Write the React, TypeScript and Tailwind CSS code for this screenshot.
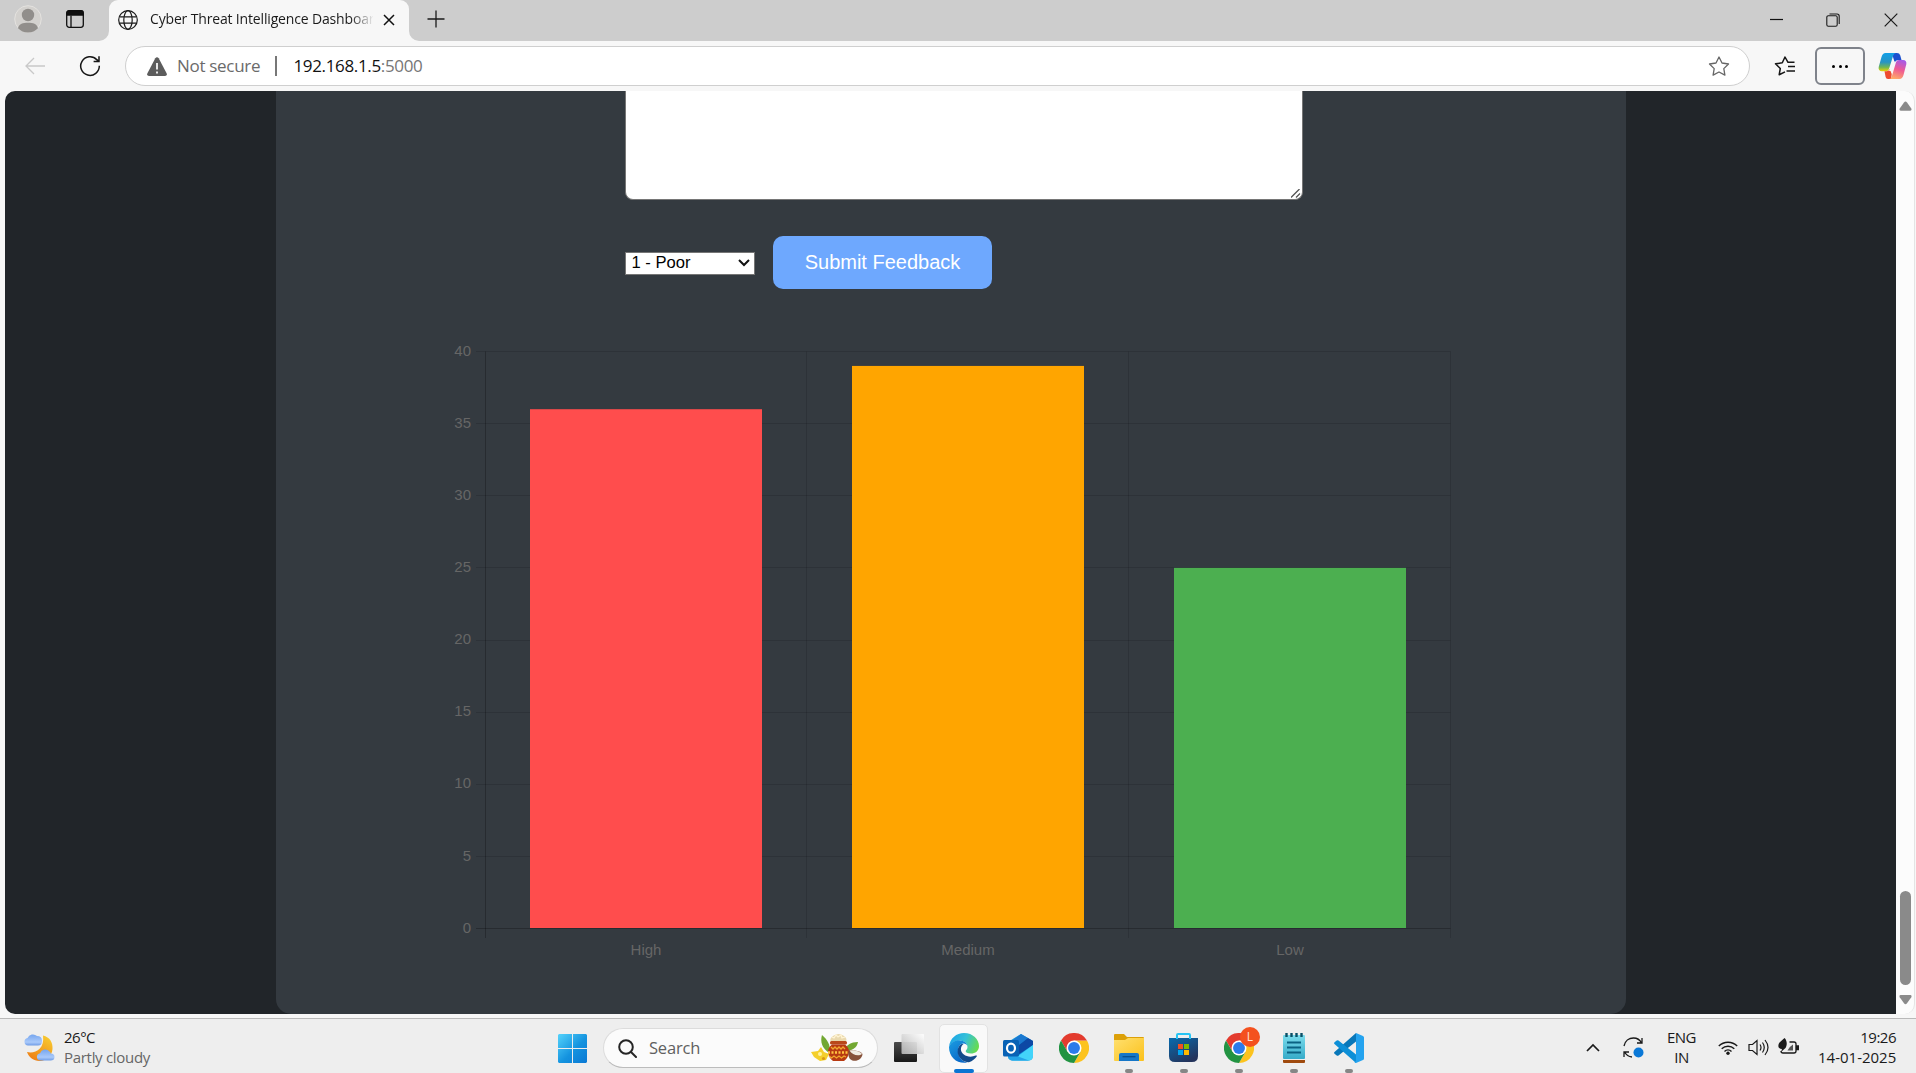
import React from "react";

const segoe = "font-['Open_Sans','Noto_Sans',sans-serif]";
const arial = "font-['Liberation_Sans',Arial,sans-serif]";

function GlobeIcon() {
  return (
    <svg width="20" height="20" viewBox="0 0 20 20" fill="none" stroke="#1a1a1a" strokeWidth="1.2" className="shrink-0">
      <circle cx="10" cy="10" r="9.3" />
      <ellipse cx="10" cy="10" rx="4.2" ry="9.3" />
      <path d="M1.5 6.8h17M1.5 13.2h17" />
    </svg>
  );
}

function TitleBar() {
  return (
    <div className="flex h-[41px] shrink-0 items-stretch bg-[#cdcdcd]">
      <div className="flex w-[109px] items-center rounded-br-[10px] pl-[14px]">
        <svg width="28" height="28" viewBox="0 0 28 28" className="-mt-[3px]">
          <circle cx="14" cy="14" r="13.3" fill="#d3d1ce" stroke="#e4e2df" />
          <circle cx="14" cy="10" r="6.2" fill="#918e8b" />
          <path d="M4 23.3c1-4.500 5-5.600 10-5.600s9 1.100 10 5.600A13.300 13.300 0 0 1 14 27.500 13.300 13.300 0 0 1 4 23.300z" fill="#918e8b" />
        </svg>
        <svg width="18" height="18" viewBox="0 0 18 18" fill="none" stroke="#0f0f0f" strokeWidth="1.300" className="-mt-[3px] ml-6">
          <rect x=".7" y=".7" width="16.600" height="16.600" rx="2.500" />
          <path d="M5 5.500v11.500" />
          <path d="M1 2.500Q1 1 2.500 1h13Q17 1 17 2.500V5H1z" fill="#0f0f0f" />
        </svg>
      </div>
      <div className="relative flex w-[300px] items-center rounded-t-[9px] bg-[#f7f7f7] pb-[2px] pl-[9px]">
        <svg className="absolute bottom-0 -left-[10px]" width="10" height="10"><path d="M10 0v10H0A10 10 0 0 0 10 0z" fill="#f7f7f7" /></svg>
        <svg className="absolute -right-[10px] bottom-0" width="10" height="10"><path d="M0 0v10h10A10 10 0 0 1 0 0z" fill="#f7f7f7" /></svg>
        <GlobeIcon />
        <span className={`${segoe} -mt-[2px] ml-[12px] w-[223px] overflow-hidden whitespace-nowrap bg-[linear-gradient(90deg,#1a1a1a_200px,transparent_224px)] bg-clip-text text-[14px] tracking-[-0.16px] text-transparent`}>
          Cyber Threat Intelligence Dashboard
        </span>
        <svg width="12" height="12" viewBox="0 0 12 12" stroke="#111" strokeWidth="1.500" className="mt-[1px] ml-[10px] shrink-0">
          <path d="M1 1l10 10M11 1L1 11" />
        </svg>
      </div>
      <svg width="18" height="18" viewBox="0 0 18 18" stroke="#1a1a1a" strokeWidth="1.300" className="ml-[18px] mt-[10px]">
        <path d="M9 .5v17M.5 9h17" />
      </svg>
      <div className="ml-auto flex items-center pr-[18px] pb-[2px]">
        <svg width="13" height="13" className="mr-[43px]"><path d="M0 6.500h13" stroke="#111" strokeWidth="1.200" /></svg>
        <svg width="14" height="14" viewBox="0 0 14 14" fill="none" stroke="#1a1a1a" strokeWidth="1.100" className="mr-[44px]">
          <rect x=".8" y="2.800" width="10.400" height="10.400" rx="1.500" />
          <path d="M3.500 1h7.500q2.200 0 2.200 2.200V11" />
        </svg>
        <svg width="14" height="14" stroke="#1a1a1a" strokeWidth="1.200"><path d="M.7.700l12.600 12.600M13.300.700L.7 13.300" /></svg>
      </div>
    </div>
  );
}

function CopilotIcon() {
  return (
    <svg width="29" height="28" viewBox="0 0 29 28">
      <defs>
        <linearGradient id="cpA" x1="0" y1="0" x2="0" y2="1">
          <stop offset="0" stopColor="#12a0e8" /><stop offset=".5" stopColor="#2794c4" /><stop offset=".78" stopColor="#70b653" /><stop offset="1" stopColor="#f0d300" />
        </linearGradient>
        <linearGradient id="cpB" x1=".7" y1="0" x2=".4" y2="1">
          <stop offset="0" stopColor="#a55be8" /><stop offset=".5" stopColor="#ef5a93" /><stop offset="1" stopColor="#ffa968" />
        </linearGradient>
      </defs>
      <path d="M14 1h5q2.500 0 3.200 2.300L23.500 8H20q-2.500 0-3.300 2.500L15 5z" fill="#1c50cf" />
      <path d="M7.500 1H18q-2 0-2.800 2.500L11 17q-.9 2.300-3.200 2.300H4q-4-.2-3.300-4.300L3.500 5Q4.600 1 7.500 1z" fill="url(#cpA)" />
      <path d="M6.500 19.300h2q2.200 0 3.200-2.300l2 5-.5 5H10q-2 0-2.400-2z" fill="#ee4b2f" />
      <path d="M21.500 27H11q2 0 2.800-2.500L18 10.300Q18.800 8 21 8h4q4 .2 3.300 4.300L25.500 23q-1.100 4-4 4z" fill="url(#cpB)" />
      <path d="M15 9.500h2L13.500 19h-2.500z" fill="#f7f7f7" />
    </svg>
  );
}

function AddressRow() {
  return (
    <div className={`flex h-[50px] shrink-0 items-center bg-[#f7f7f7] ${segoe}`}>
      <svg width="20" height="18" viewBox="0 0 20 18" fill="none" stroke="#c9c9c9" strokeWidth="1.300" className="ml-[25px]">
        <path d="M20 9H1M9 1L1 9l8 8" />
      </svg>
      <svg width="22" height="22" viewBox="0 0 22 22" fill="none" stroke="#161616" strokeWidth="1.500" className="ml-[34px]">
        <path d="M20.300 10.800A9.300 9.300 0 1 1 17.800 4.700L20 6.500M20 1.300v5.200h-5.400" />
      </svg>
      <div className="ml-6 flex h-[40px] w-[1625px] items-center rounded-full border border-[#cfcfcf] bg-white pl-[21px] pr-[19px]">
        <svg width="20" height="19" viewBox="0 0 20 19">
          <path d="M8.300 1.300q1.700-2.200 3.400 0l8 15.200q.7 2.300-1.700 2.500H2q-2.400-.2-1.700-2.500z" fill="#5c5c5c" />
          <path d="M10 6v6.500M10 14.500v2" stroke="#fff" strokeWidth="1.700" />
        </svg>
        <span className="ml-[10px] w-[84px] whitespace-nowrap text-[17px] tracking-[-0.3px] text-[#6a6a6a]">Not secure</span>
        <span className="ml-[14px] h-5 w-[1.500px] bg-[#777]" />
        <span className="ml-[17px] whitespace-nowrap text-[17px] tracking-[-0.35px] text-[#111]">
          192.168.1.5<span className="text-[#767676]">:5000</span>
        </span>
        <svg width="22" height="20" viewBox="0 0 22 20" fill="none" stroke="#666" strokeWidth="1.300" strokeLinejoin="round" className="ml-auto">
          <path d="M11 1l3 6 6.500 1-4.700 4.600 1.100 6.500-5.900-3.100-5.900 3.100 1.100-6.500L1.500 8 8 7z" />
        </svg>
      </div>
      <svg width="22" height="20" viewBox="0 0 22 20" fill="none" stroke="#161616" strokeWidth="1.500" strokeLinejoin="round" className="ml-[24px]">
        <path d="M20.500 6.300H14L11 1 8.300 6.800 1.500 7.800l4.800 4.700-1.100 6.200 5.800-2.800M14 10.500h7M12.500 15h8.500" />
      </svg>
      <div className="ml-[19px] flex h-[38px] w-[50px] items-center justify-center gap-[3.500px] rounded-[6px] border-2 border-[#7f838b]">
        <span className="size-[3px] rounded-full bg-black" />
        <span className="size-[3px] rounded-full bg-black" />
        <span className="size-[3px] rounded-full bg-black" />
      </div>
      <div className="ml-[13px]"><CopilotIcon /></div>
    </div>
  );
}

const ticks = [40, 35, 30, 25, 20, 15, 10, 5, 0];
const columnEdges = [45.5, 366.5, 688.5, 1010.5];
const bars = [
  { label: "High", value: 36, color: "#ff4d4d" },
  { label: "Medium", value: 39, color: "#ffa500" },
  { label: "Low", value: 25, color: "#4caf50" },
];

function ThreatChart() {
  const bottom = 598;
  const unit = 577 / 40;
  return (
    <svg width="1020" height="650" viewBox="0 0 1020 650" className={`ml-[164px] mt-[41px] ${arial} text-[15px]`} fill="#666">
      {ticks.map((t) => {
        const y = Math.round(bottom - t * unit) + 0.5;
        return (
          <g key={t}>
            <path d={`M36 ${y}H1010.500`} stroke="#000" strokeOpacity={t === 0 ? 0.25 : 0.12} />
            <text x="31" y={Math.floor(603.2 - t * unit)} textAnchor="end">{t}</text>
          </g>
        );
      })}
      {columnEdges.map((x, i) => (
        <path key={x} d={`M${x} 21.500V608`} stroke="#000" strokeOpacity={i === 0 ? 0.25 : 0.12} />
      ))}
      {bars.map((b, i) => (
        <g key={b.label}>
          <rect x={90 + i * 322} y={bottom + 0.5 - b.value * unit} width="232" height={b.value * unit - 0.5} fill={b.color} />
          <text x={206 + i * 322} y="625" textAnchor="middle">{b.label}</text>
        </g>
      ))}
    </svg>
  );
}

function PageView() {
  return (
    <div className="flex h-[927px] shrink-0 bg-[#f7f7f7] pl-[5px]">
      <main className={`flex h-[923px] w-[1891px] rounded-l-[10px] bg-[#212529] pl-[271px] ${arial}`}>
        <section className="flex w-[1350px] flex-col rounded-b-[15px] bg-[#343a40]">
          <div className="relative ml-[349px] h-[109px] w-[678px] rounded-b-[8px] border border-t-0 border-[#767676] bg-white">
            <svg className="absolute right-[1px] bottom-[1px]" width="10" height="9" stroke="#555" strokeWidth="1.300"><path d="M0 8.500L8.500 0M5 8.500l4-4" /></svg>
          </div>
          <div className="mt-[36px] ml-[349px] flex items-center">
            <div className="mt-[1px] flex h-[23px] w-[130px] items-center justify-between border border-[#767676] bg-white pr-[4px] pl-[5.500px] text-[16.600px] text-black">
              <span className="pt-[1px]">1 - Poor</span>
              <svg width="12" height="8" viewBox="0 0 12 8" fill="none" stroke="#111" strokeWidth="2"><path d="M1 1l5 5 5-5" /></svg>
            </div>
            <button className="ml-[18px] h-[53px] w-[219px] rounded-[10px] bg-[#6ea8fe] pb-[2px] text-[20px] text-white">Submit Feedback</button>
          </div>
          <ThreatChart />
        </section>
      </main>
      <div className="flex h-[923px] w-[19px] flex-col items-center rounded-r-[10px] border-r border-[#e4e4e4] bg-[#fcfcfc] pt-[10px] pb-[9px]">
        <svg width="13" height="10"><path d="M5 1.500q1.500-2 3 0l4.300 6q.8 2-1 2.200H1.700q-1.800-.2-1-2.200z" fill="#8a8a8a" /></svg>
        <span className="mt-auto mb-[10px] h-[94px] w-[11px] rounded-full bg-[#8a8a8a]" />
        <svg width="13" height="10"><path d="M5 8.200q1.500 2 3 0l4.300-6q.8-2-1-2.200H1.700Q-.1.200.7 2.200z" fill="#8a8a8a" /></svg>
      </div>
    </div>
  );
}

function Slot({ children, mark }: { children: React.ReactNode; mark?: boolean }) {
  return (
    <div className="relative flex h-[55px] w-[55px] items-center justify-center pt-[3px]">
      {children}
      {mark && <span className="absolute bottom-[1px] h-[4px] w-[8px] rounded-full bg-[#868686]" />}
    </div>
  );
}

function ChromeIcon() {
  return (
    <svg width="30" height="30" viewBox="0 0 48 48">
      <path d="M24 12h20.800A24 24 0 0 1 24 48l10.400-18z" fill="#fcc31e" />
      <path d="M3.200 12A24 24 0 0 1 44.800 12H24L13.600 30z" fill="#e33b2e" />
      <path d="M3.200 12l10.400 18L34.400 30 24 48A24 24 0 0 1 3.200 12z" fill="#229342" />
      <circle cx="24" cy="24" r="12" fill="#fff" />
      <circle cx="24" cy="24" r="9.500" fill="#2b7bea" />
    </svg>
  );
}

function EdgeIcon() {
  return (
    <svg width="30" height="30" viewBox="0 0 30 30">
      <defs>
        <linearGradient id="eT" x1="0" y1=".3" x2="1" y2=".6"><stop offset="0" stopColor="#1ca5e8" /><stop offset=".5" stopColor="#35c1d8" /><stop offset="1" stopColor="#68dc4c" /></linearGradient>
        <linearGradient id="eL" x1="0" y1="0" x2=".6" y2="1"><stop offset="0" stopColor="#1b9de2" /><stop offset="1" stopColor="#0867c7" /></linearGradient>
      </defs>
      <path d="M0 14C1 5 7.500 0 15 0c9 0 15 6.500 15 13 0 5-3.800 7.500-8 7.500-3.500 0-5.500-1.300-5.300-2.500C17 17 18.500 16.500 18.500 14c0-4-4-6.500-8.500-6.500-5 0-9 3-10 6.500z" fill="url(#eT)" />
      <path d="M0 14C1.500 9.500 5.500 7.300 10 7.300c5 0 8.500 3.200 8.500 6.700 0-2-2-3.500-4-3.500-3.500 0-6 4-5.500 8.500.5 5.500 4.500 9.500 9.500 10.500C9 31.500 0 25 0 14z" fill="url(#eL)" />
      <path d="M12.500 11C8.500 13 7.500 19 10 23.500c2.500 4 6 6 10 5.700 3.500-1.200 6-3.200 7.700-5.700.5-1-.2-1.400-1-.9-7 2.900-14.500-.6-14.800-6 0-2.600 1-4.600 2.600-5.600z" fill="#114a8b" />
    </svg>
  );
}

function WeatherIcon() {
  return (
    <svg width="31" height="29" viewBox="0 0 31 29">
      <defs>
        <linearGradient id="moon" x1=".8" y1="0" x2=".2" y2="1"><stop offset="0" stopColor="#f8cb2f" /><stop offset="1" stopColor="#ed7d16" /></linearGradient>
        <linearGradient id="cloud" x1="0" y1="0" x2="0" y2="1"><stop offset="0" stopColor="#75a5ee" /><stop offset=".7" stopColor="#a9c9fa" /><stop offset="1" stopColor="#6f9ce6" /></linearGradient>
      </defs>
      <path d="M19 2.500C26 4 29 10 28.500 16c-.5 7-6 12-13 12C9.500 28 5 24.500 3 19c7 2 18-2 16-16.500z" fill="url(#moon)" />
      <path d="M4 12.500A3.800 3.800 0 0 1 3.500 5 6 6 0 0 1 13 3q5 0 5 5 0 4.500-4 4.500z" fill="url(#cloud)" />
      <path d="M16 27.500a3.700 3.700 0 0 1 0-7.300 5.500 5.500 0 0 1 9.500-1.700q1 .5 1.200 2 3.800 0 3.800 3.500t-4 3.500z" fill="url(#cloud)" />
    </svg>
  );
}

function PotIcon() {
  return (
    <svg width="52" height="28" viewBox="0 0 52 28">
      <path d="M18 19C11 14 9 8 11 1c6 5 8 10 8 16z" fill="#72a832" />
      <path d="M33 17c2-6 7-9 14-9-1 6-6 9-14 9z" fill="#72a832" />
      <path d="M20 8C17 4 24 0 27.500 0S38 4 34.500 8z" fill="#ead9ae" />
      <path d="M21 3l2 1 2-3 2 2 3-2 1 3 3-1" stroke="#fff4d4" strokeWidth="1.300" fill="none" />
      <rect x="19" y="7" width="17" height="3.500" rx="1.500" fill="#b9481b" />
      <path d="M21 10.500h13c6 4 5 12-1 16.500H22c-6-4.500-7-12.500-1-16.500z" fill="#b83a12" />
      <path d="M20 13l2 2 2-2 2 2 2-2 2 2 2-2 2 2M18 22l2.500 2 2.500-2 2.500 2 2.500-2 2.500 2 2.500-2 2 1" stroke="#f2a82f" strokeWidth="1.300" fill="none" />
      <path d="M17 18.500h21" stroke="#ffc442" strokeWidth="2.500" strokeDasharray="2 1.500" />
      <path d="M0 18l7-1 3-4 3 5 5 2-3 6-6 1-6-4z" fill="#f4cf2b" />
      <circle cx="9" cy="20" r="2" fill="#fff2a0" />
      <circle cx="12.500" cy="24.500" r="1.600" fill="#db9811" />
      <path d="M38 16c5 0 12 1 13.500 4-.5 6-8 9-12.500 5-2-3-2-6-1-9z" fill="#87513a" />
      <path d="M38.500 16.500c4-1 11 1 12.500 3.500-3.500 2.500-10 1-12.500-3.500z" fill="#f0ebe2" />
    </svg>
  );
}

function Taskbar() {
  return (
    <footer className={`flex h-[55px] shrink-0 items-center border-t border-[#b9b9b9] bg-[#eeeeee] ${segoe}`}>
      <div className="flex w-[558px] items-center pt-[2px] pl-[24px]">
        <WeatherIcon />
        <div className="ml-[9px] text-[15px] leading-[20px] tracking-[-0.5px] text-[#1a1a1a]">
          <div>26°C</div>
          <div className="tracking-[-0.3px] text-[#666]">Partly cloudy</div>
        </div>
      </div>
      <svg width="29" height="29" viewBox="0 0 29 29" className="mt-[4px]">
        <defs><linearGradient id="win" x1="0" y1="0" x2="1" y2="1"><stop offset="0" stopColor="#55d3fb" /><stop offset=".55" stopColor="#1493df" /><stop offset="1" stopColor="#0a78d4" /></linearGradient></defs>
        <path d="M1 0h13v14H0V1zM15 0h13l1 1v13H15zM0 15h14v14H1l-1-1zM15 15h14v13l-1 1H15z" fill="url(#win)" />
      </svg>
      <div className="mt-[4px] ml-[16px] flex h-[40px] w-[275px] items-center rounded-full border border-[#dcdcdc] border-b-[#bcbcbc] bg-[#fbfbfb] pl-[14px] pr-[14px]">
        <svg width="19" height="19" viewBox="0 0 19 19" fill="none" stroke="#252525" strokeWidth="2" strokeLinecap="round"><circle cx="8" cy="8" r="6.800" /><path d="M13 13l5 5" /></svg>
        <span className="ml-[12px] text-[16.500px] tracking-[-0.2px] text-[#606060]">Search</span>
        <div className="ml-auto"><PotIcon /></div>
      </div>
      <div className="ml-[3px] flex">
        <Slot>
          <svg width="30" height="28" viewBox="0 0 30 28">
            <defs>
              <linearGradient id="tv1" x1="0" y1="0" x2="0" y2="1"><stop offset="0" stopColor="#4b4b4b" /><stop offset="1" stopColor="#181818" /></linearGradient>
              <linearGradient id="tv2" x1="1" y1="0" x2="0" y2="1"><stop offset="0" stopColor="#fff" /><stop offset="1" stopColor="#b5b5b5" /></linearGradient>
            </defs>
            <rect y="8" width="23" height="20" rx="1" fill="url(#tv1)" /><rect x="7.500" width="22.500" height="20" rx="1" fill="url(#tv2)" fillOpacity=".93" />
          </svg>
        </Slot>
        <div className="relative flex h-[55px] w-[55px] items-center justify-center">
          <div className="mt-[5px] flex size-[49px] items-start justify-center rounded-[5px] border border-[#e2e2e2] bg-[#f9f9f9] pt-[8px]"><EdgeIcon /></div>
          <span className="absolute bottom-[1px] h-[4px] w-[20px] rounded-full bg-[#0a75d3]" />
        </div>
        <Slot>
          <svg width="31" height="27" viewBox="0 0 31 27">
            <path d="M5 8L18 0l12 7v14q0 5-4 5.500H9q-4-.5-4-5z" fill="#1596dc" />
            <path d="M10 6l8-6 7 4-12 9H9z" fill="#1b78d0" /><path d="M25 4l5 3v4L12 23v-9z" fill="#0d48a5" />
            <path d="M30 11v11q0 4-4 4.500H9L30 11z" fill="#43d4fa" /><path d="M8 20l18 6.500H9q-4-.5-4-5z" fill="#24a4e8" />
            <rect y="6" width="16" height="16.500" rx="1.500" fill="#0862b5" />
            <ellipse cx="8" cy="14.200" rx="4" ry="4.500" fill="none" stroke="#fff" strokeWidth="2.200" />
          </svg>
        </Slot>
        <Slot><ChromeIcon /></Slot>
        <Slot mark>
          <svg width="30" height="27" viewBox="0 0 30 27">
            <defs><linearGradient id="fld" x1="0" y1="0" x2="1" y2="1"><stop offset="0" stopColor="#ffe06f" /><stop offset="1" stopColor="#fbc11b" /></linearGradient></defs>
            <path d="M0 1q0-1 1-1h9l3 3h16q1 0 1 1v5H0z" fill="#dca008" /><path d="M0 6h11l3-2h16v22q0 1-1 1H1q-1 0-1-1z" fill="url(#fld)" />
            <path d="M5 27v-6q0-2 2-2h16q2 0 2 2v6z" fill="#1677c8" /><path d="M8.500 22.700h13" stroke="#07508f" strokeWidth="1.300" />
          </svg>
        </Slot>
        <Slot mark>
          <svg width="29" height="29" viewBox="0 0 29 29">
            <defs><linearGradient id="sto" x1="0" y1="0" x2=".6" y2="1"><stop offset="0" stopColor="#086bae" /><stop offset="1" stopColor="#24345c" /></linearGradient></defs>
            <path d="M0 5h29v18q0 6-6 6H6q-6 0-6-6z" fill="url(#sto)" /><path d="M8 6V2q0-1 1-1h11q1 0 1 1v4" fill="none" stroke="#25c4f4" strokeWidth="2" />
            <path d="M9 11h5v5H9z" fill="#f25022" /><path d="M15 11h5v5h-5z" fill="#7fba00" /><path d="M9 17h5v5H9z" fill="#00a4ef" /><path d="M15 17h5v5h-5z" fill="#ffb900" />
          </svg>
        </Slot>
        <Slot mark>
          <ChromeIcon />
          <span className="absolute top-[8px] right-[6px] flex size-[20px] items-center justify-center rounded-full bg-[#f4511e] text-[12px] text-[#ffe0d5]">L</span>
        </Slot>
        <Slot mark>
          <svg width="22" height="30" viewBox="0 0 22 30">
            <defs><linearGradient id="note" x1="0" y1="0" x2="0" y2="1"><stop offset="0" stopColor="#7bdcec" /><stop offset="1" stopColor="#36abc9" /></linearGradient></defs>
            <path d="M0 27h22v2q0 1-1 1H1q-1 0-1-1z" fill="#9f4a0e" /><path d="M0 25h22v2H0z" fill="#eee" />
            <rect y="2" width="22" height="24" rx="1" fill="url(#note)" /><path d="M4 9.500h14M4 14.500h14M4 19.500h14" stroke="#0b6283" strokeWidth="2" />
            <path d="M3.500 0v4M8.500 0v4M13.500 0v4M18.500 0v4" stroke="#0b5067" strokeWidth="2.400" />
          </svg>
        </Slot>
        <Slot mark>
          <svg width="30" height="30" viewBox="0 0 30 30">
            <path d="M22 8.500L4.500 22.500q-1 .7-1.800 0L.5 20.700q-.8-1 0-1.700L22 0z" fill="#0877b9" />
            <path d="M22 21.500L4.500 7.500q-1-.7-1.800 0L.5 9.300q-.8 1 0 1.700L22 30z" fill="#0d8fd7" />
            <path d="M22 0l7 3q1 .5 1 1.500v21q0 1-1 1.500l-7 3q-1 0-1.500-.7L22 28z" fill="#24a3ef" />
          </svg>
        </Slot>
      </div>
      <div className="ml-auto flex items-center pt-[2px] pr-[20px] text-[#1a1a1a]">
        <svg width="14" height="9" fill="none" stroke="#1a1a1a" strokeWidth="1.700"><path d="M1 8l6-6 6 6" /></svg>
        <svg width="21" height="21" viewBox="0 0 21 21" fill="none" stroke="#1a1a1a" strokeWidth="1.300" className="ml-[23px]">
          <path d="M1 9C2 4 6 1 10.500 1c3.500 0 6.500 2 8 5M19 1v5h-5M9 20c-3-.3-6-2.300-7.500-5M1 20v-5h5" /><circle cx="15.500" cy="15.500" r="5" fill="#0a78d7" stroke="none" />
        </svg>
        <div className="ml-[22px] w-[31px] text-center text-[15px] leading-[20px] tracking-[-0.5px]">
          <div>ENG</div><div>IN</div>
        </div>
        <svg width="20" height="15" viewBox="0 0 20 15" fill="none" stroke="#1a1a1a" strokeWidth="1.400" className="ml-[21px]">
          <path d="M.8 6a13 13 0 0 1 18.400 0M3.700 8.800a9 9 0 0 1 12.600 0M6.500 11.500a5 5 0 0 1 7 0" /><circle cx="10" cy="13.200" r="1.700" fill="#1a1a1a" stroke="none" />
        </svg>
        <svg width="21" height="17" viewBox="0 0 21 17" fill="none" stroke="#1a1a1a" strokeWidth="1.200" className="ml-[10px]">
          <path d="M1 5.500h3.500L9 1.500v14l-4.500-4H1zM12 5.500q2 3 0 6M14.500 3.500q3.500 5 0 10M17 1q6 7.500 0 15" />
        </svg>
        <svg width="21" height="17" viewBox="0 0 21 17" fill="none" stroke="#1a1a1a" strokeWidth="1.300" className="ml-[9px] -mt-[2px]">
          <path d="M11.500 4H16q2 0 2 2v7q0 2-2 2H5q-2 0-2-2" /><path d="M18.500 8h2v3.500h-2z" fill="#1a1a1a" />
          <path d="M6.500 0C9 2 9.500 7 7.500 10L3 14l1-3C0 11-.5 7 1.500 4.500z" fill="#1a1a1a" stroke="none" /><path d="M9.500 12.500h5.500V6.500q-3.500 2-5.500 6z" fill="#555" stroke="none" />
        </svg>
        <div className="ml-[19px] w-[78px] whitespace-nowrap text-right text-[15px] leading-[20px] tracking-[0px]">
          <div className="tracking-[-0.5px]">19:26</div><div>14-01-2025</div>
        </div>
      </div>
    </footer>
  );
}

export default function App() {
  return (
    <div className="flex h-[1073px] w-[1916px] flex-col overflow-hidden bg-[#f7f7f7]">
      <TitleBar />
      <AddressRow />
      <PageView />
      <Taskbar />
    </div>
  );
}
